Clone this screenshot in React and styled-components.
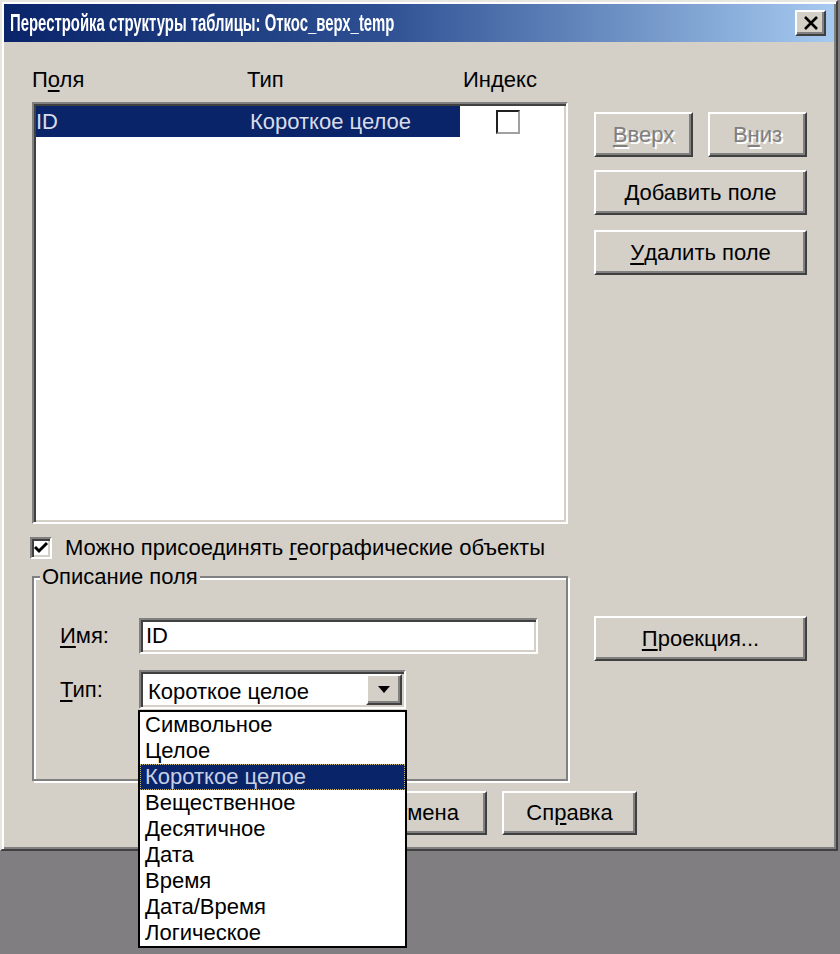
import React from "react";
import styled, { createGlobalStyle } from "styled-components";

const FACE = "#d4d0c8";
const NAVY = "#0a246a";

const GlobalStyle = createGlobalStyle`
  html, body {
    margin: 0;
    padding: 0;
    background: #807e80;
  }
  body {
    font-family: "Liberation Sans", Arial, sans-serif;
    font-size: 22px;
    color: #000;
  }
  #root {
    min-height: 100vh;
  }
  * {
    box-sizing: border-box;
  }
`;

// mnemonic letter
const U = styled.span`
  text-decoration: underline;
  text-underline-offset: 3px;
  text-decoration-thickness: 2px;
`;

export default function App() {
  return (
    <>
      <GlobalStyle />
      <Window>
        {/* title bar */}
        <TitleBar>
          <Title>Перестройка структуры таблицы: Откос_верх_temp</Title>
          <CloseButton>
            <svg width="16" height="14" viewBox="0 0 16 14">
              <path d="M2 1 L14 13 M14 1 L2 13" stroke="#000" strokeWidth="2.6" />
            </svg>
          </CloseButton>
        </TitleBar>

        <Body>
          {/* left column */}
          <Main>
            <Headers>
              <span>
                П<U>о</U>ля
              </span>
              <span>Тип</span>
              <span>Индекс</span>
            </Headers>

            <ListBox>
              <Row>
                <Cell selected>ID</Cell>
                <Cell selected>Короткое целое</Cell>
                <IndexCell>
                  <SmallCheck />
                </IndexCell>
              </Row>
            </ListBox>

            <CheckRow>
              <CheckBox>
                <svg width="16" height="14" viewBox="0 0 16 14">
                  <path d="M2 6 L6 10 L14 2" fill="none" stroke="#000" strokeWidth="3" />
                </svg>
              </CheckBox>
              <span>
                Можно присоединять <U>г</U>еографические объекты
              </span>
            </CheckRow>

            <GroupBox>
              <Legend>Описание поля</Legend>
              <GroupContent>
                <FieldRow>
                  <FieldLabel>
                    <U>И</U>мя:
                  </FieldLabel>
                  <TextInput>ID</TextInput>
                </FieldRow>
                <FieldRow gap={16}>
                  <FieldLabel>
                    <U>Т</U>ип:
                  </FieldLabel>
                  <Combo>
                    <ComboText>Короткое целое</ComboText>
                    <ArrowButton>
                      <svg width="12" height="7" viewBox="0 0 12 7">
                        <path d="M0 0 H12 L6 7 Z" fill="#000" />
                      </svg>
                    </ArrowButton>
                  </Combo>
                </FieldRow>
              </GroupContent>
            </GroupBox>
          </Main>

          {/* right column */}
          <Side>
            <ButtonPair>
              <Button width={99} disabled>
                <U>В</U>верх
              </Button>
              <Button width={99} disabled>
                В<U>н</U>из
              </Button>
            </ButtonPair>
            <Button top={13}>
              <U>Д</U>обавить поле
            </Button>
            <Button top={15}>
              <U>У</U>далить поле
            </Button>
            <Button top={341}>
              <U>П</U>роекция...
            </Button>
          </Side>
        </Body>

        {/* bottom buttons (the first one is hidden under the open list) */}
        <Footer>
          <Button width={135} height={44}>
            Отмена
          </Button>
          <Button width={135} height={44}>
            Сп<U>р</U>авка
          </Button>
        </Footer>

        {/* open list of the type combo */}
        <DropList>
          {TYPES.map((t) => (
            <DropItem key={t} selected={t === "Короткое целое"}>
              {t}
            </DropItem>
          ))}
        </DropList>
      </Window>
    </>
  );
}

const TYPES = [
  "Символьное",
  "Целое",
  "Короткое целое",
  "Вещественное",
  "Десятичное",
  "Дата",
  "Время",
  "Дата/Время",
  "Логическое",
];

const Window = styled.div`
  position: relative;
  width: 838px;
  background: ${FACE};
  border: 2px solid;
  border-color: #e8e6e0 #404040 #404040 #e8e6e0;
  box-shadow: inset 2px 2px #fff, inset -2px -2px #808080;
  padding: 2px;
`;

const TitleBar = styled.div`
  height: 38px;
  display: flex;
  align-items: center;
  justify-content: space-between;
  padding: 0 8px 0 6px;
  background: linear-gradient(to right, ${NAVY} 0%, #2d4f92 45%, #a6caf0 100%);
`;

const Title = styled.span`
  display: inline-block;
  color: #fff;
  font-weight: 700;
  font-size: 24px;
  white-space: nowrap;
  transform: scaleX(0.62);
  transform-origin: left center;
`;

const raised = `
  background: ${FACE};
  border: 2px solid;
  border-color: #fff #404040 #404040 #fff;
  box-shadow: inset -2px -2px #808080;
`;

const sunken = `
  background: #fff;
  border: 2px solid;
  border-color: #808080 #fff #fff #808080;
  box-shadow: inset 2px 2px #404040, inset -2px -2px ${FACE};
`;

const CloseButton = styled.div`
  ${raised}
  width: 31px;
  height: 26px;
  display: flex;
  align-items: center;
  justify-content: center;
`;

const Body = styled.div`
  display: flex;
  gap: 26px;
  padding: 26px 0 0 28px;
`;

const Main = styled.div`
  width: 536px;
  display: flex;
  flex-direction: column;
`;

const Headers = styled.div`
  display: grid;
  grid-template-columns: 215px 216px 1fr;
  height: 24px;
  line-height: 24px;
`;

const ListBox = styled.div`
  ${sunken}
  margin-top: 10px;
  height: 422px;
  padding: 2px 2px;
`;

const Row = styled.div`
  display: grid;
  grid-template-columns: 214px 210px 1fr;
  height: 31px;
`;

const Cell = styled.div`
  background: ${({ selected }) => (selected ? NAVY : "transparent")};
  color: ${({ selected }) => (selected ? "#d8dce8" : "#000")};
  line-height: 31px;
`;

const IndexCell = styled.div`
  display: flex;
  align-items: center;
  padding-left: 36px;
`;

const SmallCheck = styled.div`
  width: 24px;
  height: 24px;
  background: #fff;
  border: 2px solid;
  border-color: #202020 #a0a0a0 #a0a0a0 #202020;
`;

const CheckRow = styled.div`
  display: flex;
  align-items: center;
  gap: 13px;
  height: 24px;
  margin-top: 12px;
`;

const CheckBox = styled.div`
  ${sunken}
  width: 22px;
  height: 22px;
  margin-left: -2px;
  display: flex;
  align-items: center;
  justify-content: center;
`;

const GroupBox = styled.fieldset`
  margin: 5px 0 0;
  padding: 0;
  min-width: 0;
  border: 2px solid #808080;
  box-shadow: 2px 2px 0 #fff, inset 2px 2px 0 #fff;
`;

const Legend = styled.legend`
  margin-left: 6px;
  padding: 0 2px;
  line-height: 24px;
  background: ${FACE};
`;

const GroupContent = styled.div`
  padding: 29px 0 70px 26px;
`;

const FieldRow = styled.div`
  display: flex;
  align-items: center;
  margin-top: ${({ gap }) => gap || 0}px;
`;

const FieldLabel = styled.span`
  width: 79px;
`;

const TextInput = styled.div`
  ${sunken}
  width: 399px;
  height: 36px;
  line-height: 32px;
  padding-left: 5px;
`;

const Combo = styled.div`
  ${sunken}
  width: 267px;
  height: 39px;
  display: flex;
  align-items: stretch;
  padding: 2px;
`;

const ComboText = styled.div`
  flex: 1;
  line-height: 35px;
  padding-left: 5px;
`;

const ArrowButton = styled.div`
  ${raised}
  width: 36px;
  display: flex;
  align-items: center;
  justify-content: center;
`;

// dropdown overlay, hangs under the type combo and past the window edge
const DropList = styled.div`
  position: absolute;
  top: 708px;
  left: 136px;
  width: 269px;
  background: #fff;
  border: 2px solid #000;
  z-index: 5;
`;

const DropItem = styled.div`
  height: 26px;
  line-height: 26px;
  padding-left: 5px;
  white-space: nowrap;
  background: ${({ selected }) => (selected ? NAVY : "transparent")};
  color: ${({ selected }) => (selected ? "#c8d0e4" : "#000")};
  outline: ${({ selected }) => (selected ? "1px dotted #c8b870" : "none")};
  outline-offset: -1px;
`;

const Side = styled.div`
  width: 213px;
  display: flex;
  flex-direction: column;
  padding-top: 44px;
`;

const ButtonPair = styled.div`
  display: flex;
  gap: 15px;
`;

const Button = styled.div`
  ${raised}
  width: ${({ width }) => (width ? `${width}px` : "100%")};
  height: ${({ height }) => height || 45}px;
  margin-top: ${({ top }) => top || 0}px;
  display: flex;
  align-items: center;
  justify-content: center;
  color: ${({ disabled }) => (disabled ? "#808080" : "#000")};
  text-shadow: ${({ disabled }) => (disabled ? "2px 2px 0 #fff" : "none")};
`;

const Footer = styled.div`
  display: flex;
  gap: 15px;
  padding: 10px 0 12px 348px;
`;
